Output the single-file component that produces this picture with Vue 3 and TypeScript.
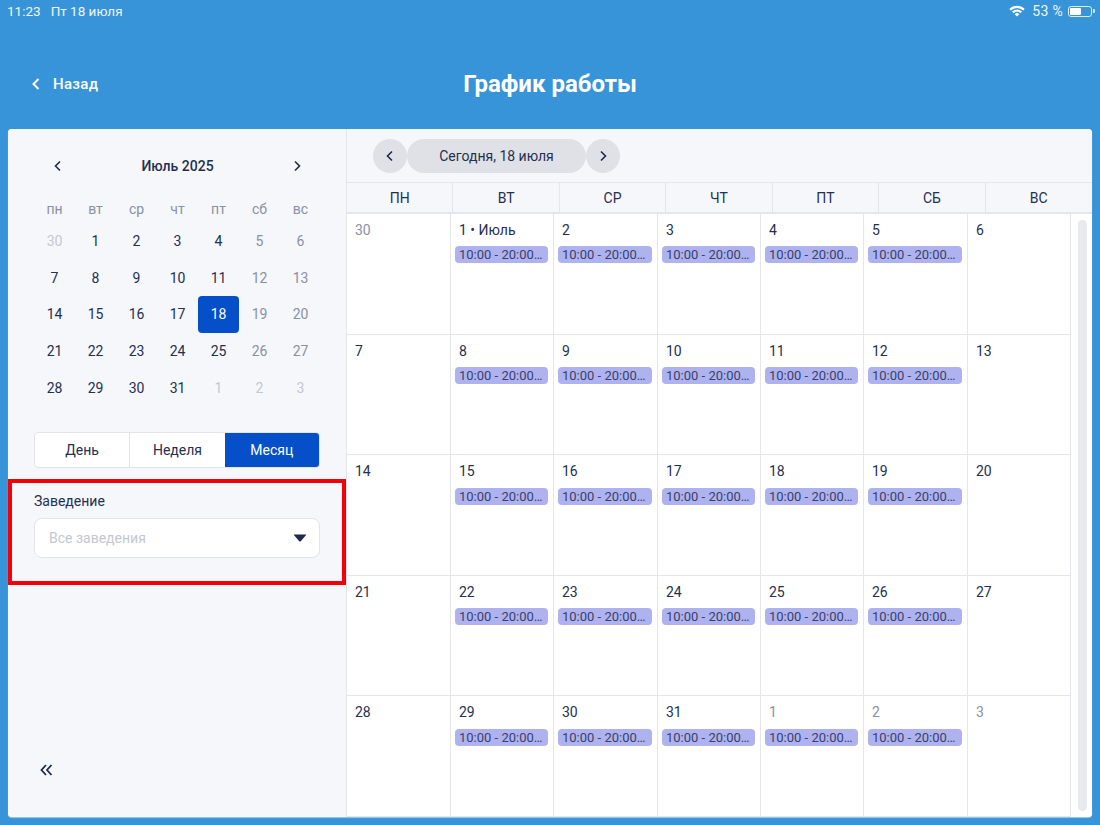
<script setup lang="ts">
interface Day { n: number; muted?: boolean; active?: boolean; weekend?: boolean }
const weekdays = ['пн', 'вт', 'ср', 'чт', 'пт', 'сб', 'вс']
const headers = ['ПН', 'ВТ', 'СР', 'ЧТ', 'ПТ', 'СБ', 'ВС']
const mini: Day[] = []
mini.push({ n: 30, muted: true })
for (let n = 1; n <= 31; n++) {
  const idx = mini.length % 7
  mini.push({ n, weekend: idx >= 5, active: n === 18 })
}
for (let n = 1; n <= 3; n++) mini.push({ n, muted: true })

interface Cell { label: string; muted: boolean; chip: boolean }
const cells: Cell[] = []
cells.push({ label: '30', muted: true, chip: false })
for (let n = 1; n <= 31; n++) {
  const idx = cells.length % 7
  cells.push({ label: n === 1 ? '1 • Июль' : String(n), muted: false, chip: idx > 0 && idx < 6 })
}
for (let n = 1; n <= 3; n++) {
  const idx = cells.length % 7
  cells.push({ label: String(n), muted: true, chip: idx > 0 && idx < 6 })
}
const modes = ['День', 'Неделя', 'Месяц']
</script>

<template>
  <div class="page">
    <div class="status">
      <span class="time">11:23</span>
      <span class="date">Пт 18 июля</span>
      <span class="spacer"></span>
      <svg class="wifi" width="16" height="12" viewBox="0 0 16 12">
        <path d="M0.3 3.9A11 11 0 0 1 15.7 3.9L14.2 5.5A8.8 8.8 0 0 0 1.8 5.5Z" fill="#fff" />
        <path d="M3 6.6A7.2 7.2 0 0 1 13 6.6L11.5 8.2A5 5 0 0 0 4.5 8.2Z" fill="#fff" />
        <path d="M5.7 9.2A3.3 3.3 0 0 1 10.3 9.2L8 11.6Z" fill="#fff" />
      </svg>
      <span class="pct">53 %</span>
      <span class="battery"><span class="battery-fill"></span></span>
      <span class="battery-cap"></span>
    </div>

    <div class="nav">
      <div class="back">
        <svg width="10" height="14" viewBox="0 0 10 14"><path d="M7.5 2 L2.5 7 L7.5 12" fill="none" stroke="#fff" stroke-width="2" /></svg>
        <span>Назад</span>
      </div>
      <h1 class="title">График работы</h1>
    </div>

    <div class="card">
      <aside class="side">
        <div class="mini-head">
          <svg width="10" height="12" viewBox="0 0 10 12"><path d="M7 1.5 L2.5 6 L7 10.5" fill="none" stroke="#1f2a4d" stroke-width="1.6" /></svg>
          <span class="month">Июль 2025</span>
          <svg width="10" height="12" viewBox="0 0 10 12"><path d="M3 1.5 L7.5 6 L3 10.5" fill="none" stroke="#1f2a4d" stroke-width="1.6" /></svg>
        </div>
        <div class="mini-week">
          <span v-for="w in weekdays" :key="w">{{ w }}</span>
        </div>
        <div class="mini-grid">
          <div
            v-for="(d, i) in mini"
            :key="i"
            class="mini-day"
            :class="{ muted: d.muted, weekend: d.weekend, active: d.active }"
          >
            <span>{{ d.n }}</span>
          </div>
        </div>
        <div class="segments">
          <div v-for="(m, i) in modes" :key="m" class="segment" :class="{ on: i === 2 }">{{ m }}</div>
        </div>
        <div class="filter">
          <div class="filter-label">Заведение</div>
          <div class="select">
            <span>Все заведения</span>
            <svg width="14" height="8" viewBox="0 0 14 8"><path d="M0.5 0.5 H13.5 L8 7 Q7 8 6 7 Z" fill="#1f2a4d" /></svg>
          </div>
        </div>
        <div class="collapse">
          <svg width="13" height="12" viewBox="0 0 13 12"><path d="M6 1 L1.5 6 L6 11 M11.5 1 L7 6 L11.5 11" fill="none" stroke="#1f2a4d" stroke-width="1.8" /></svg>
        </div>
      </aside>

      <main class="main">
        <div class="toolbar">
          <button class="round">
            <svg width="10" height="12" viewBox="0 0 10 12"><path d="M7 1.5 L2.5 6 L7 10.5" fill="none" stroke="#1f2a4d" stroke-width="1.6" /></svg>
          </button>
          <div class="today">Сегодня, 18 июля</div>
          <button class="round">
            <svg width="10" height="12" viewBox="0 0 10 12"><path d="M3 1.5 L7.5 6 L3 10.5" fill="none" stroke="#1f2a4d" stroke-width="1.6" /></svg>
          </button>
        </div>
        <div class="head-row">
          <div v-for="h in headers" :key="h" class="head-cell">{{ h }}</div>
        </div>
        <div class="body">
          <div class="grid">
            <div v-for="(c, i) in cells" :key="i" class="cell">
              <div class="cell-date" :class="{ muted: c.muted }">{{ c.label }}</div>
              <div v-if="c.chip" class="chip">10:00 - 20:00…</div>
            </div>
          </div>
          <div class="track-wrap"><div class="track"></div></div>
        </div>
      </main>
    </div>
  </div>
</template>

<style>
html, body { margin: 0; padding: 0; background: #3794d8; }
</style>

<style scoped>
.page {
  width: 1100px;
  height: 825px;
  background: #3794d8;
  font-family: Roboto, "Noto Sans", sans-serif;
  color: #252f50;
  display: flex;
  flex-direction: column;
  overflow: hidden;
}
.status {
  height: 22px;
  padding: 0 5px 0 7px;
  display: flex;
  align-items: center;
  color: #eef6fc;
  font-size: 13.5px;
  box-sizing: border-box;
}
.date { margin-left: 10px; }
.spacer { flex: 1; }
.wifi { margin-right: 7px; }
.pct { margin-right: 5px; font-size: 14px; letter-spacing: 0.3px; }
.battery {
  width: 20px;
  height: 7px;
  border: 1px solid #dcecf8;
  border-radius: 3px;
  padding: 1px;
  display: block;
}
.battery-fill { display: block; width: 11px; height: 7px; background: #fff; border-radius: 1px; }
.battery-cap { width: 2px; height: 4px; background: #cfe5f5; border-radius: 0 1px 1px 0; margin-left: 1px; }
.nav {
  height: 107px;
  position: relative;
  display: flex;
  align-items: center;
  justify-content: center;
  color: #fff;
  padding-top: 17px;
  box-sizing: border-box;
}
.back {
  position: absolute;
  left: 31px;
  top: 53px;
  display: flex;
  align-items: center;
  gap: 12px;
  font-size: 15px;
  font-weight: 500;
  letter-spacing: 0.3px;
}
.title {
  margin: 0;
  font-size: 24px;
  font-weight: 700;
  line-height: 30px;
}
.card {
  margin: 0 8px;
  height: 688px;
  background: #fff;
  border-radius: 4px;
  display: flex;
  overflow: hidden;
  box-shadow: 0 1px 1px rgba(255, 255, 255, 0.5);
}
.side {
  width: 339px;
  flex: none;
  background: #f5f7fb;
  border-right: 1px solid #e4e6eb;
  box-sizing: border-box;
  display: flex;
  flex-direction: column;
}
.mini-head {
  width: 287px;
  margin: 24px 0 0 26px;
  height: 26px;
  padding: 0 19px;
  box-sizing: border-box;
  display: flex;
  align-items: center;
  justify-content: space-between;
}
.month { font-size: 14px; font-weight: 500; }
.mini-week, .mini-grid {
  margin-left: 26px;
  width: 287px;
  display: grid;
  grid-template-columns: repeat(7, 41px);
}
.mini-week {
  margin-top: 15px;
  height: 29px;
  align-items: center;
  justify-items: center;
  color: #8a90a3;
  font-size: 14px;
}
.mini-grid { grid-auto-rows: 36.6px; margin-top: 0; }
.mini-day {
  display: flex;
  align-items: center;
  justify-content: center;
  font-size: 14px;
}
.mini-day.weekend { color: #8a90a3; }
.mini-day.muted { color: #c3c7d1; }
.mini-day.active span {
  width: 41px;
  height: 37px;
  display: flex;
  align-items: center;
  justify-content: center;
  background: #0550c8;
  color: #fff;
  border-radius: 4px;
}
.segments {
  margin: 26.5px 0 0 26px;
  width: 286px;
  height: 36px;
  display: flex;
  box-sizing: border-box;
  border: 1px solid #e2e4ea;
  border-radius: 4px;
  background: #fff;
  overflow: hidden;
}
.segment {
  flex: 1;
  display: flex;
  align-items: center;
  justify-content: center;
  font-size: 14px;
  border-left: 1px solid #e2e4ea;
}
.segment:first-child { border-left: 0; }
.segment.on {
  background: #0550c8;
  color: #fff;
  border-left: 0;
}
.filter {
  margin-top: 11px;
  height: 106px;
  width: 338px;
  box-sizing: border-box;
  border: 4px solid #f40009;
  padding: 5px 22px 0;
}
.filter-label { font-size: 14px; line-height: 18px; margin-top: 4px; }
.select {
  margin-top: 8px;
  height: 40px;
  box-sizing: border-box;
  background: #fff;
  border: 1px solid #e2e4ea;
  border-radius: 8px;
  padding: 0 12px 0 14px;
  display: flex;
  align-items: center;
  justify-content: space-between;
  font-size: 14px;
  color: #c4c7d0;
}
.collapse { margin: auto 0 41px 32px; height: 12px; display: flex; }
.main { flex: 1; display: flex; flex-direction: column; min-width: 0; background: #f5f7fb; }
.toolbar {
  height: 53px;
  flex: none;
  padding: 10px 0 0 26px;
  box-sizing: border-box;
  display: flex;
  align-items: flex-start;
}
.round {
  width: 34px;
  height: 34px;
  padding: 0;
  border: 0;
  border-radius: 50%;
  background: #dfe1e6;
  display: flex;
  align-items: center;
  justify-content: center;
}
.today {
  width: 179px;
  height: 34px;
  border-radius: 17px;
  background: #dfe1e6;
  display: flex;
  align-items: center;
  justify-content: center;
  font-size: 14px;
}
.head-row {
  height: 32px;
  flex: none;
  display: grid;
  grid-template-columns: repeat(7, 1fr);
  border-top: 1px solid #e4e6eb;
  border-bottom: 2px solid #e4e6eb;
  box-sizing: border-box;
}
.head-cell {
  display: flex;
  align-items: center;
  justify-content: center;
  font-size: 14px;
  border-right: 1px solid #e4e6eb;
}
.head-cell:last-child { border-right: 0; }
.body { flex: 1; display: flex; background: #fff; min-height: 0; }
.grid {
  width: 724px;
  flex: none;
  display: grid;
  grid-template-columns: 104px 103px 104px 103px 103px 104px 103px;
  grid-template-rows: repeat(5, 1fr);
}
.cell {
  border-right: 1px solid #e4e6eb;
  border-bottom: 1px solid #e4e6eb;
  box-sizing: border-box;
  padding: 7px 4px 0 4px;
  min-width: 0;
}
.cell-date {
  font-size: 14px;
  line-height: 18px;
  padding-left: 4px;
}
.cell-date.muted { color: #8a90a3; }
.chip {
  margin-top: 7.4px;
  margin-right: 1px;
  height: 17px;
  line-height: 17px;
  background: #aeb3f0;
  border-radius: 4px;
  padding: 0 4px;
  font-size: 13px;
  color: #3a4068;
  white-space: nowrap;
  overflow: hidden;
}
.track-wrap { flex: 1; padding: 6px 5px 6px 7px; box-sizing: border-box; }
.track { height: 100%; background: #e8eaed; border-radius: 5px; }
</style>
